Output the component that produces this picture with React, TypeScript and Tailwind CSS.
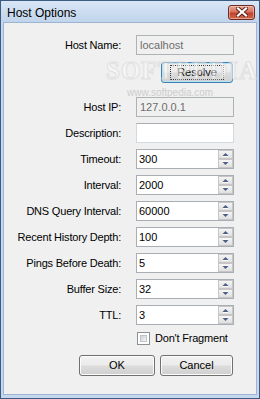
import React from "react";

const SpinButtons = () => (
  <svg width="15" height="18" viewBox="0 0 15 18" className="block">
    <defs>
      <linearGradient id="sg" x1="0" y1="0" x2="0" y2="1">
        <stop offset="0" stopColor="#f6f6f6" />
        <stop offset="1" stopColor="#dedede" />
      </linearGradient>
    </defs>
    <rect x="0.5" y="0.5" width="14" height="8" fill="url(#sg)" stroke="#c6c6c6" />
    <rect x="0.5" y="9.5" width="14" height="8" fill="url(#sg)" stroke="#c6c6c6" />
    <polygon points="4.5,6 10.5,6 7.5,3" fill="#4a5f86" />
    <line x1="4.5" y1="6.5" x2="10.5" y2="6.5" stroke="#ffffff" strokeWidth="1" opacity="0.8" />
    <polygon points="4.5,12 10.5,12 7.5,15" fill="#4a5f86" />
    <line x1="4.5" y1="11.5" x2="10.5" y2="11.5" stroke="#ffffff" strokeWidth="1" opacity="0.8" />
  </svg>
);

const Row = ({ label, children }: { label: string; children: React.ReactNode }) => (
  <div className="flex items-center h-[20px]">
    <div className="w-[117px] text-right whitespace-nowrap text-black tracking-[-0.2px]">{label}</div>
    <div className="ml-[15px]">{children}</div>
  </div>
);

const DisabledBox = ({ value }: { value: string }) => (
  <div className="w-[98px] h-[20px] border border-[#adb2b5] bg-[#f0f0f0] text-[#6d6d6d] pl-[3px] flex items-center leading-none">
    {value}
  </div>
);

const TextBox = () => (
  <div className="w-[98px] h-[20px] border border-[#d4d9df] border-t-[#abadb3] bg-white" />
);

const SpinBox = ({ value }: { value: string }) => (
  <div className="w-[98px] h-[20px] border border-[#a9aeb5] bg-white flex items-center justify-between pl-[2px] pr-0">
    <span className="leading-none">{value}</span>
    <SpinButtons />
  </div>
);

const Button = ({ label, w, focused }: { label: string; w: string; focused?: boolean }) => (
  <div
    className={
      "h-[21px] rounded-[3px] border flex items-center justify-center bg-[linear-gradient(#f2f2f2_0%,#ebebeb_48%,#dddddd_52%,#cfcfcf_100%)] " +
      w +
      (focused
        ? " border-[#3c7fb1] shadow-[inset_0_0_0_1px_#b6e4f7]"
        : " border-[#707070] shadow-[inset_0_0_0_1px_#fcfcfc]")
    }
  >
    {focused ? (
      <span className="border border-dotted border-[#333] px-[6px] leading-[13px]">{label}</span>
    ) : (
      <span className="leading-none">{label}</span>
    )}
  </div>
);

export default function App() {
  return (
    <div className="relative w-[260px] h-[399px] border border-[#3d5b82] bg-[#c5d8ee] flex flex-col font-['Liberation_Sans',Arial,sans-serif] text-[11px] text-black overflow-hidden">
      {/* Title bar */}
      <div className="h-[21px] flex items-center justify-between bg-[linear-gradient(#d9e6f5,#c0d4eb)] pl-[6px] pr-[4px]">
        <span className="text-[12px] leading-none text-black pt-[2px]">Host Options</span>
        <div className="w-[27px] h-[15px] mt-[1px] rounded-[3px] border border-[#6b2a22] bg-[linear-gradient(#e8a596_0%,#d7735f_45%,#c2412c_55%,#cf6a4e_100%)] flex items-center justify-center shadow-[inset_0_0_0_1px_rgba(255,220,210,0.5)]">
          <svg width="12" height="10" viewBox="0 0 12 10">
            <path d="M2 1.5 L10 8.5 M10 1.5 L2 8.5" stroke="#5a2018" strokeWidth="4" strokeLinecap="square" />
            <path d="M2 1.5 L10 8.5 M10 1.5 L2 8.5" stroke="#ffffff" strokeWidth="2.2" strokeLinecap="square" />
          </svg>
        </div>
      </div>

      {/* Client area */}
      <div className="flex-1 mx-[2px] mb-[3px] border border-[#9db4d2] bg-[#f0f0f0] flex flex-col pt-[12px]">
        <Row label="Host Name:">
          <DisabledBox value="localhost" />
        </Row>
        <div className="flex pl-[157px] mt-[7px]">
          <Button label="Resolve" w="w-[72px]" focused />
        </div>
        <div className="flex flex-col gap-[6px] mt-[14px]">
          <Row label="Host IP:">
            <DisabledBox value="127.0.0.1" />
          </Row>
          <Row label="Description:">
            <TextBox />
          </Row>
          <Row label="Timeout:">
            <SpinBox value="300" />
          </Row>
          <Row label="Interval:">
            <SpinBox value="2000" />
          </Row>
          <Row label="DNS Query Interval:">
            <SpinBox value="60000" />
          </Row>
          <Row label="Recent History Depth:">
            <SpinBox value="100" />
          </Row>
          <Row label="Pings Before Death:">
            <SpinBox value="5" />
          </Row>
          <Row label="Buffer Size:">
            <SpinBox value="32" />
          </Row>
          <Row label="TTL:">
            <SpinBox value="3" />
          </Row>
        </div>
        <div className="flex items-center pl-[133px] mt-[7px] h-[13px]">
          <div className="w-[13px] h-[13px] border border-[#8e8f8f] bg-white p-[2px]">
            <div className="w-full h-full bg-[linear-gradient(135deg,#cbcfd5,#f7f7f7)] border border-[#c0c4ca]" />
          </div>
          <span className="ml-[5px] leading-none tracking-[-0.2px]">Don't Fragment</span>
        </div>
        <div className="flex pl-[75px] mt-[10px] gap-[5px]">
          <Button label="OK" w="w-[76px]" />
          <Button label="Cancel" w="w-[73px]" />
        </div>
      </div>

      {/* Watermark */}
      <div className="absolute left-[105px] top-[57px] pointer-events-none text-[25px] font-bold font-['Liberation_Serif',serif] tracking-[1px] text-[#fafafa] [-webkit-text-stroke:1px_#d6d6d6] opacity-60 leading-none">
        SOFTPEDIA
      </div>
      <div className="absolute left-[126px] top-[87px] pointer-events-none text-[10px] text-[#cdcdcd] leading-none">
        www.softpedia.com
      </div>
    </div>
  );
}
